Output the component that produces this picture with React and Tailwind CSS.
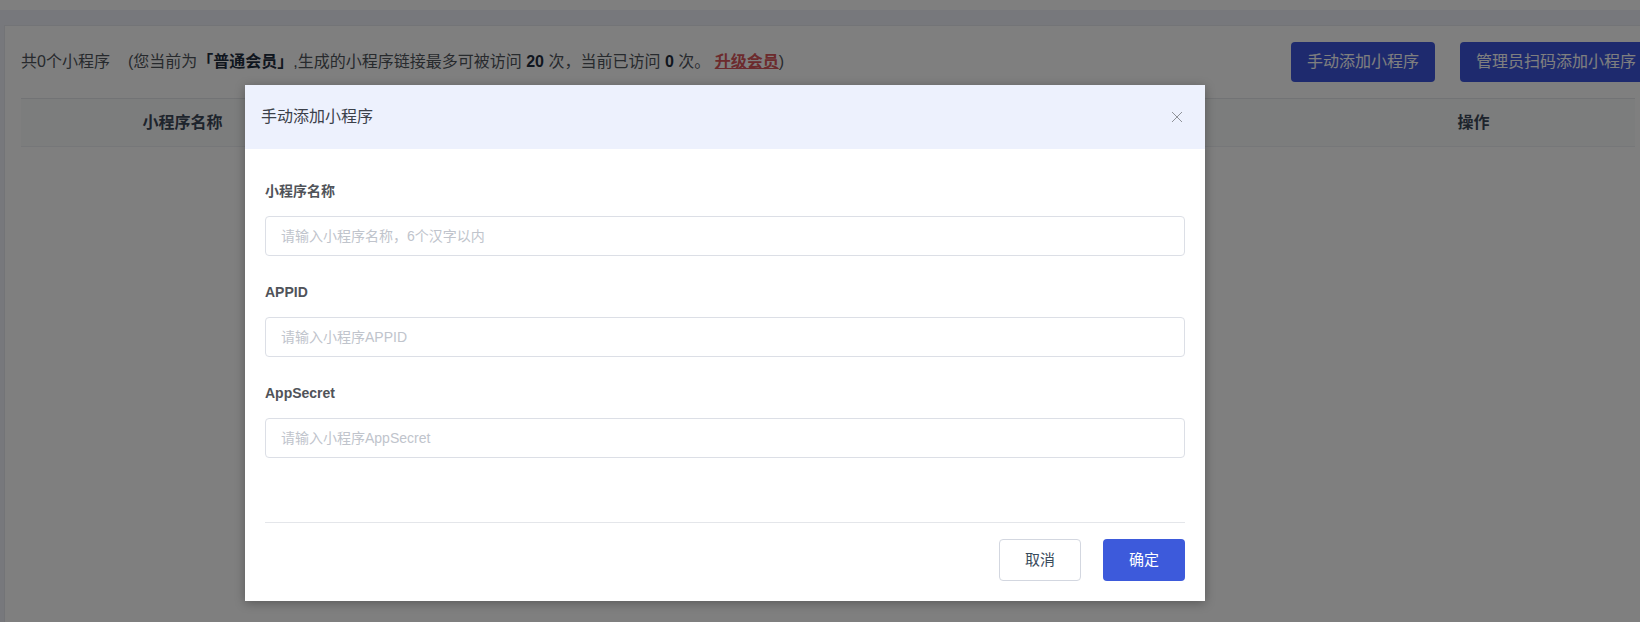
import React from "react";

const FONT = { fontFamily: '"Liberation Sans", "Noto Sans CJK SC", sans-serif' };

function Field({ label, placeholder, last }) {
  return (
    <div className={last ? "" : "mb-[26px]"}>
      <div className="h-[20px] leading-[20px] text-[14px] font-bold text-[#505359]">{label}</div>
      <div className="mt-[15px] h-[40px] rounded-[4px] border border-[#dcdfe6] flex items-center pl-[15px] text-[14px] text-[#c0c4cc]">
        {placeholder}
      </div>
    </div>
  );
}

export default function App() {
  const cols = ["小程序名称", "APPID", "创建时间", "访问次数", "操作"];
  return (
    <div style={FONT} className="relative w-[1640px] h-[622px] overflow-hidden bg-[#eef0f8]">
      <div className="h-[10px] bg-white" />
      <div className="pt-[15px] pl-[4px]">
        <div className="w-[1700px] h-[640px] bg-white border border-[#e6e8ee] pl-[16px] pt-[16px]">
          <div className="w-[1631px] h-[40px] flex items-center">
            <div className="text-[16px] leading-[22px] text-[#4f545b] whitespace-nowrap">
              <span>共0个小程序</span>
              <span className="inline-block w-[18px]" />
              <span>(您当前为</span>
              <span className="font-bold text-[#1f2d3d]">「普通会员」</span>
              <span>,生成的小程序链接最多可被访问 </span>
              <span className="font-bold text-[#1f2d3d]">20</span>
              <span> 次，当前已访问 </span>
              <span className="font-bold text-[#1f2d3d]">0</span>
              <span> 次。 </span>
              <span className="font-bold text-[#d9565a] underline">升级会员</span>
              <span>)</span>
            </div>
            <div className="ml-auto flex gap-[25px]">
              <button className="h-[40px] px-[16px] rounded-[4px] bg-[#3d55dc] text-white text-[16px] whitespace-nowrap">
                手动添加小程序
              </button>
              <button className="h-[40px] px-[16px] rounded-[4px] bg-[#3d55dc] text-white text-[16px] whitespace-nowrap">
                管理员扫码添加小程序
              </button>
            </div>
          </div>
          <div className="mt-[16px] w-[1614px] border-t border-[#e4e6ea]">
            <div className="grid grid-cols-5 h-[48px] bg-[#f9fafb] border-b border-[#eceef2]">
              {cols.map((c) => (
                <div key={c} className="flex items-center justify-center text-[16px] font-bold text-[#3c4858]">
                  {c}
                </div>
              ))}
            </div>
          </div>
        </div>
      </div>

      <div className="absolute inset-0 bg-black/50" />

      <div className="absolute left-[245px] top-[85px] w-[960px] bg-white shadow-[0_2px_10px_rgba(0,0,0,0.3)]">
        <div className="h-[64px] bg-[#edf1fd] flex items-center justify-between pl-[16px] pr-[22px]">
          <span className="text-[16px] text-[#3b4049]">手动添加小程序</span>
          <svg width="12" height="12" viewBox="0 0 12 12">
            <path d="M1 1 L11 11 M11 1 L1 11" stroke="#909399" strokeWidth="1" fill="none" />
          </svg>
        </div>
        <div className="px-[20px] pt-[32px]">
          <Field label="小程序名称" placeholder="请输入小程序名称，6个汉字以内" />
          <Field label="APPID" placeholder="请输入小程序APPID" />
          <Field label="AppSecret" placeholder="请输入小程序AppSecret" last />
          <div className="mt-[64px] border-t border-[#e4e6ea] pt-[16px] pb-[20px] flex justify-end gap-[22px]">
            <button className="w-[82px] h-[42px] rounded-[4px] border border-[#d3d7e0] bg-white text-[15px] text-[#3a4a5c]">
              取消
            </button>
            <button className="w-[82px] h-[42px] rounded-[4px] bg-[#3d5adb] text-[15px] text-white">
              确定
            </button>
          </div>
        </div>
      </div>
    </div>
  );
}
